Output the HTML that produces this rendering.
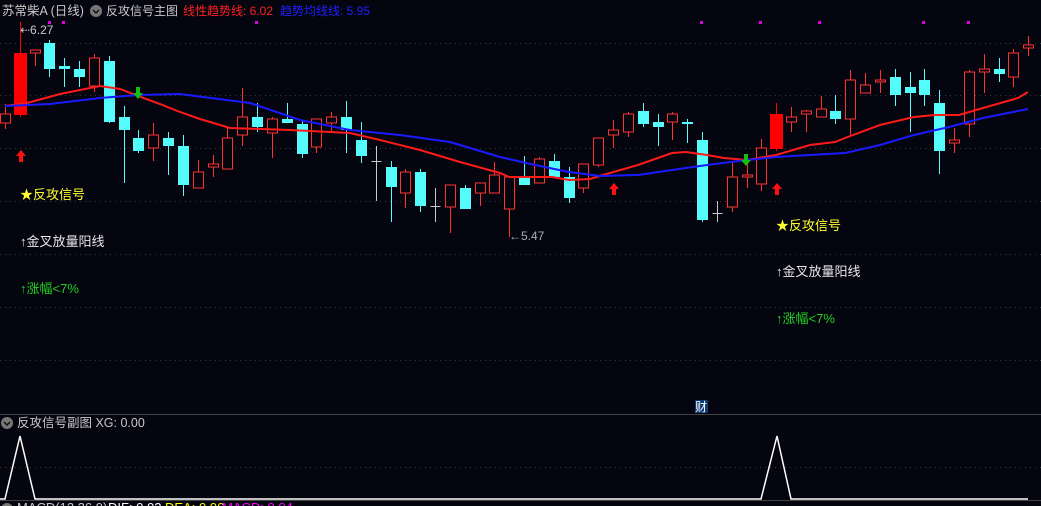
<!DOCTYPE html>
<html><head><meta charset="utf-8"><style>
html,body{margin:0;padding:0;background:#05050f;width:1041px;height:506px;overflow:hidden}
svg{display:block}
text{font-family:"Liberation Sans","Noto Sans CJK SC",sans-serif}
</style></head><body>
<svg id="s" width="1041" height="506" xmlns="http://www.w3.org/2000/svg">
<rect width="1041" height="506" fill="#05050f"/>
<g stroke="#3a3a3a" stroke-dasharray="1 4" stroke-width="1">
<line x1="0" y1="43.5" x2="1041" y2="43.5"/><line x1="0" y1="95.5" x2="1041" y2="95.5"/>
<line x1="0" y1="148.5" x2="1041" y2="148.5"/><line x1="0" y1="201.5" x2="1041" y2="201.5"/>
<line x1="0" y1="254.5" x2="1041" y2="254.5"/><line x1="0" y1="307.5" x2="1041" y2="307.5"/>
<line x1="0" y1="360.5" x2="1041" y2="360.5"/><line x1="0" y1="467.5" x2="1041" y2="467.5"/>
</g>
<line x1="0" y1="414.5" x2="1041" y2="414.5" stroke="#444" />
<line x1="0" y1="500.5" x2="1041" y2="500.5" stroke="#444" />
<g id="c"></g>
<polyline fill="none" stroke="#ff1a1a" stroke-width="2" points="5,106 27,103 60,94 100,86 120,89 138,96 160,104 180,112 200,119 230,128 290,130 350,133 380,140 420,150 460,162 500,173 509,177 552,177 569,180 590,179 603,175 638,165 672,153 686,152 707,155 724,158 747,160 776,155 810,145 835,142 845,138 880,125 914,117 935,115 959,115 983,108 1018,98 1028,92"/>
<polyline fill="none" stroke="#1a1aff" stroke-width="2" points="5,106 50,104 100,98 138,95 180,94 250,103 300,120 350,130 400,135 450,142 500,157 535,165 569,172 600,176 638,175 672,170 707,165 747,160 776,157 810,155 845,153 880,145 914,135 949,127 983,118 1028,109"/>
<g fill="#e000e0"><rect x="48" y="21" width="3" height="3"/><rect x="62" y="21" width="3" height="3"/><rect x="255" y="21" width="3" height="3"/><rect x="700" y="21" width="3" height="3"/><rect x="759" y="21" width="3" height="3"/><rect x="818" y="21" width="3" height="3"/><rect x="922" y="21" width="3" height="3"/><rect x="967" y="21" width="3" height="3"/></g>
<g fill="#ff1010">
<path d="M21,150 l-5,6 h3 v6 h4 v-6 h3z"/>
<path d="M614,183 l-5,6 h3 v6 h4 v-6 h3z"/>
<path d="M777,183 l-5,6 h3 v6 h4 v-6 h3z"/>
</g>
<g fill="#10c010">
<path d="M138,99 l-5,-6 h3 v-6 h4 v6 h3z"/>
<path d="M746,166 l-5,-6 h3 v-6 h4 v6 h3z"/>
</g>
<text x="2" y="15" font-size="12.5" fill="#c8c8c8">苏常柴A (日线)</text>
<circle cx="96" cy="11" r="6" fill="#777"/><path d="M93,10 l3,3 l3,-3" stroke="#111" stroke-width="1.5" fill="none"/>
<text x="106" y="15" font-size="12" fill="#c8c8c8">反攻信号主图</text>
<text x="183" y="15" font-size="12" fill="#ff2020">线性趋势线: 6.02</text>
<text x="280" y="15" font-size="12" fill="#2020ff">趋势均线线: 5.95</text>
<text x="20" y="34" font-size="12" fill="#c8c8c8">⇠6.27</text>
<text x="509" y="240" font-size="12" fill="#aab">←5.47</text>
<text x="20" y="199" font-size="13" fill="#ffff30">★反攻信号</text>
<text x="20" y="246" font-size="13" fill="#e8e8e8">↑金叉放量阳线</text>
<text x="20" y="293" font-size="13" fill="#20d020">↑涨幅&lt;7%</text>
<text x="776" y="230" font-size="13" fill="#ffff30">★反攻信号</text>
<text x="776" y="276" font-size="13" fill="#e8e8e8">↑金叉放量阳线</text>
<text x="776" y="323" font-size="13" fill="#20d020">↑涨幅&lt;7%</text>
<rect x="695" y="400" width="13" height="13" fill="#0a3a70"/>
<text x="695" y="411" font-size="12" fill="#fff">财</text>
<circle cx="7" cy="423" r="6" fill="#777"/><path d="M4,422 l3,3 l3,-3" stroke="#111" stroke-width="1.5" fill="none"/>
<text x="17" y="427" font-size="12.5" fill="#c8c8c8">反攻信号副图  XG: 0.00</text>
<polyline fill="none" stroke="#fff" stroke-width="1.5" points="0,499 5,499 20,436 35,499 761,499 777,436 791,499 1028,499"/>
<circle cx="7" cy="509" r="6" fill="#777"/>
<text x="17" y="512" font-size="13" fill="#c8c8c8">MACD(12,26,9)</text>
<text x="108" y="512" font-size="13" fill="#fff">DIF: 0.02</text>
<text x="165" y="512" font-size="13" fill="#ffff00">DEA: 0.06</text>
<text x="222" y="512" font-size="13" fill="#ff00ff">MACD: 0.04</text>
</svg>
<script>
var d=[
[114,123,104,129,'r'],[53,115,22,117,'R'],[50,53,50,66,'r'],[43,69,40,77,'c'],[66,69,58,87,'c'],[69,77,61,87,'c'],[58,86,54,92,'r'],[61,122,56,123,'c'],[117,130,106,183,'c'],[138,151,130,153,'c'],
[135,148,123,161,'r'],[138,146,132,175,'c'],[146,185,135,196,'c'],[172,188,160,188,'r'],[164,167,155,177,'r'],[138,169,127,169,'r'],[117,135,88,146,'r'],[117,127,103,132,'c'],[119,133,117,158,'r'],[119,123,103,123,'c'],
[124,154,120,158,'c'],[119,147,119,153,'r'],[117,123,112,133,'r'],[117,130,101,153,'c'],[140,156,122,163,'c'],[161,161,146,201,'w'],[167,187,161,222,'c'],[172,193,169,208,'r'],[172,206,169,212,'c'],[206,206,188,222,'w'],
[185,207,185,233,'r'],[188,209,185,209,'c'],[183,193,183,206,'r'],[175,193,162,193,'r'],[177,209,177,237,'r'],[176,185,156,185,'c'],[159,183,157,183,'r'],[161,177,154,177,'c'],[177,198,167,203,'c'],[164,188,164,193,'r'],
[138,165,138,167,'r'],[130,135,120,148,'r'],[114,132,112,137,'r'],[111,124,103,127,'c'],[122,127,114,146,'c'],[114,122,112,140,'r'],[122,124,119,143,'c'],[140,220,132,222,'c'],[213,213,201,222,'w'],[177,207,163,212,'r'],
[175,177,163,188,'r'],[148,184,139,191,'r'],[114,149,103,151,'R'],[117,122,107,132,'r'],[111,114,110,132,'r'],[109,117,96,117,'r'],[111,119,95,124,'c'],[80,119,70,135,'r'],[85,93,73,93,'r'],[80,82,70,93,'r'],
[77,95,69,106,'c'],[87,93,72,132,'c'],[80,95,69,106,'c'],[103,151,90,174,'c'],[140,143,128,153,'r'],[72,124,70,137,'r'],[69,72,54,93,'r'],[69,74,58,82,'c'],[53,77,49,87,'r'],[45,48,36,56,'r']];
var g=document.getElementById('c'),h='';
d.forEach(function(a,i){var x=Math.round(5+i*14.83)+0.5,t=a[4];
var col=t=='c'?'#54fcfc':t=='w'?'#c8c8c8':(t=='R'?'#ff0000':'#ff3232');
var w=(t=='R')?12:10;
h+='<line x1="'+x+'" y1="'+a[2]+'" x2="'+x+'" y2="'+a[3]+'" stroke="'+col+'"/>';
if(t=='w'){h+='<line x1="'+(x-5)+'" y1="'+a[0]+'.5" x2="'+(x+5)+'" y2="'+a[0]+'.5" stroke="'+col+'"/>';}
else if(t=='r'){h+='<rect x="'+(x-5)+'" y="'+a[0]+'" width="10" height="'+Math.max(a[1]-a[0],2)+'" fill="#05050f" stroke="'+col+'"/>';}
else{h+='<rect x="'+(x-w/2-0.5)+'" y="'+a[0]+'" width="'+(w+1)+'" height="'+Math.max(a[1]-a[0],2)+'" fill="'+col+'"/>';}
});
g.innerHTML=h;
</script>
</body></html>
